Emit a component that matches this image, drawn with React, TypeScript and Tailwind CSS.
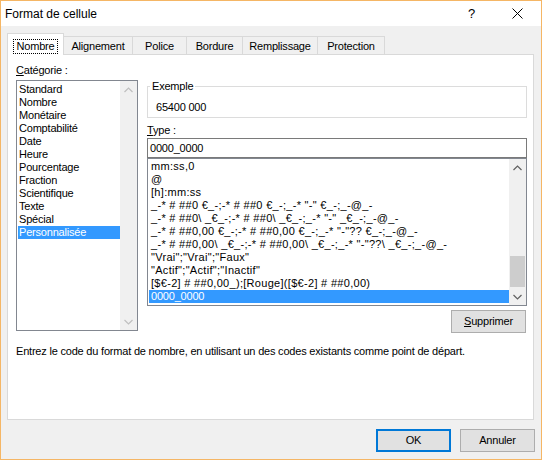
import React from 'react';

const font = { fontFamily: '"Liberation Sans", Arial, sans-serif' };

const categories = [
  'Standard',
  'Nombre',
  'Monétaire',
  'Comptabilité',
  'Date',
  'Heure',
  'Pourcentage',
  'Fraction',
  'Scientifique',
  'Texte',
  'Spécial',
  'Personnalisée',
];

const codes = [
  'mm:ss,0',
  '@',
  '[h]:mm:ss',
  '_-* # ##0 €_-;-* # ##0 €_-;_-* "-" €_-;_-@_-',
  '_-* # ##0\\ _€_-;-* # ##0\\ _€_-;_-* "-" _€_-;_-@_-',
  '_-* # ##0,00 €_-;-* # ##0,00 €_-;_-* "-"?? €_-;_-@_-',
  '_-* # ##0,00\\ _€_-;-* # ##0,00\\ _€_-;_-* "-"??\\ _€_-;_-@_-',
  '"Vrai";"Vrai";"Faux"',
  '"Actif";"Actif";"Inactif"',
  '[$€-2] # ##0,00_);[Rouge]([$€-2] # ##0,00)',
  '0000_0000',
];

const tabs = [
  { label: 'Nombre', w: 'w-[57px]' },
  { label: 'Alignement', w: 'w-[70px]' },
  { label: 'Police', w: 'w-[55px]' },
  { label: 'Bordure', w: 'w-[57px]' },
  { label: 'Remplissage', w: 'w-[76px]' },
  { label: 'Protection', w: 'w-[68px]' },
];

function Chevron({ up, color }: { up?: boolean; color: string }) {
  return (
    <svg width="9" height="6" viewBox="0 0 9 6">
      <polyline
        points={up ? '0.5,5 4.5,1 8.5,5' : '0.5,1 4.5,5 8.5,1'}
        fill="none"
        stroke={color}
        strokeWidth="1.2"
      />
    </svg>
  );
}

function ScrollBar({ disabled }: { disabled?: boolean }) {
  const c = disabled ? '#bfbfbf' : '#606060';
  return (
    <div className="flex w-[17px] flex-col bg-[#f0f0f0]">
      <div className="flex h-[17px] items-center justify-center">
        <Chevron up color={c} />
      </div>
      <div className="flex flex-1 flex-col justify-end pb-[1px]">
        {!disabled && <div className="mx-[1px] h-[31px] bg-[#cdcdcd]" />}
      </div>
      <div className="flex h-[17px] items-center justify-center">
        <Chevron color={c} />
      </div>
    </div>
  );
}

export default function App() {
  return (
    <div
      className="flex h-[460px] w-[542px] flex-col border border-[#f5b665] text-[11px] tracking-[-0.2px] text-black"
      style={font}
    >
      {/* barre de titre */}
      <div className="flex h-[25px] items-center bg-white pl-[4px]">
        <span className="text-[12px] tracking-normal">Format de cellule</span>
        <span className="ml-auto mr-[37px] text-[13px]">?</span>
        <svg width="11" height="11" viewBox="0 0 11 11" className="mr-[18px]">
          <path d="M0.5 0.5L10.5 10.5M10.5 0.5L0.5 10.5" stroke="#000" strokeWidth="1" />
        </svg>
      </div>

      <div className="flex flex-1 flex-col bg-[#f0f0f0] pl-[6px] pt-[7px]">
        {/* onglets */}
        <div className="flex h-[21px] items-end">
          {tabs.map((t, i) =>
            i === 0 ? (
              <div
                key={t.label}
                className={`relative z-10 -mb-px flex h-[22px] ${t.w} items-start justify-center border border-b-0 border-[#d9d9d9] bg-white pt-[5px]`}
              >
                <span className="border border-dotted border-black px-[3px] leading-[13px]">
                  {t.label}
                </span>
              </div>
            ) : (
              <div
                key={t.label}
                className={`-ml-px flex h-[18px] ${t.w} items-center justify-center border border-b-0 border-[#d9d9d9] pt-[1px]`}
              >
                {t.label}
              </div>
            )
          )}
        </div>

        {/* panneau */}
        <div className="flex h-[366px] w-[527px] flex-col border border-[#d9d9d9] bg-white pl-[8px]">
          <div className="flex">
            <div className="flex w-[122px] flex-col pt-[9px]">
              <div className="leading-[13px]">
                <u>C</u>atégorie :
              </div>
              <div className="mt-[3px] flex h-[251px] border border-[#828790]">
                <div className="flex-1 pt-[2px]">
                  {categories.map((c, i) => (
                    <div
                      key={c}
                      className={`ml-[1px] pl-[1px] leading-[13px] ${
                        i === categories.length - 1 ? 'bg-[#3399ff] text-white' : ''
                      }`}
                    >
                      {c}
                    </div>
                  ))}
                </div>
                <ScrollBar disabled />
              </div>
            </div>

            <div className="ml-[9px] flex w-[380px] flex-col pt-[24px]">
              <fieldset className="border border-[#dcdcdc] px-0 pb-[3px]">
                <legend className="ml-[2px] px-[2px] leading-[14px]">Exemple</legend>
                <div className="pl-[8px] pt-[7px] leading-[14px]">65400 000</div>
              </fieldset>
              <div className="mt-[5px] leading-[14px]">
                <u>T</u>ype :
              </div>
              <div className="mt-[1px] flex h-[20px] items-center border border-[#7a7a7a] pl-[2px]">
                0000_0000
              </div>
              <div className="flex h-[148px] border border-[#828790]">
                <div className="flex-1 overflow-hidden whitespace-nowrap pt-[1px] tracking-[0.3px]">
                  {codes.map((c, i) => (
                    <div
                      key={i}
                      className={`ml-[1px] pl-[2px] leading-[13px] ${
                        i === codes.length - 1 ? 'bg-[#3399ff] text-white tracking-[-0.2px]' : ''
                      }`}
                    >
                      {c}
                    </div>
                  ))}
                </div>
                <ScrollBar />
              </div>
              <button className="mr-[1px] mt-[4px] h-[23px] w-[75px] self-end border border-[#adadad] bg-[#e1e1e1]">
                <u>S</u>upprimer
              </button>
            </div>
          </div>

          <div className="mt-[12px] leading-[13px]">
            Entrez le code du format de nombre, en utilisant un des codes existants comme point de départ.
          </div>
        </div>

        {/* boutons */}
        <div className="mt-[9px] flex justify-end gap-[9px] pr-[6px]">
          <button className="h-[23px] w-[75px] border-2 border-[#0078d7] bg-[#e1e1e1]">OK</button>
          <button className="h-[23px] w-[75px] border border-[#adadad] bg-[#e1e1e1]">Annuler</button>
        </div>
      </div>
    </div>
  );
}
